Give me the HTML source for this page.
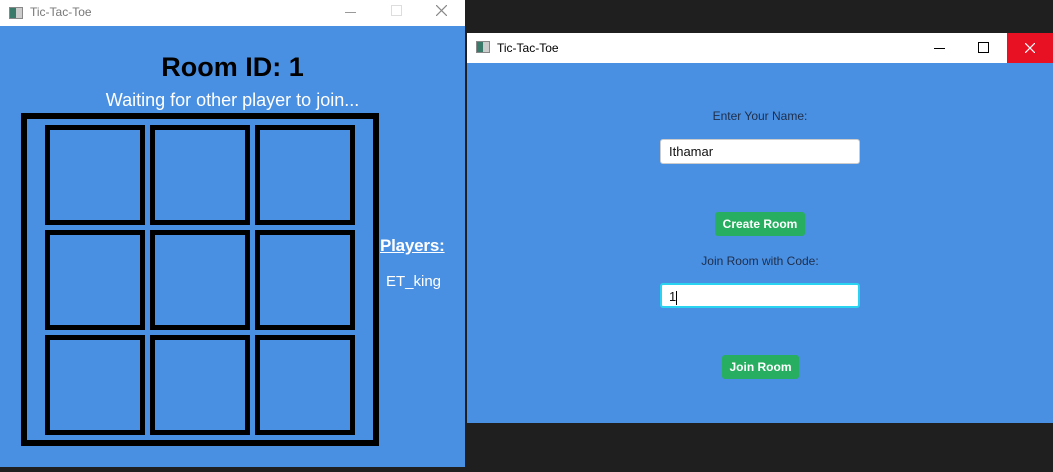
<!DOCTYPE html>
<html><head><style>
body{margin:0;width:1053px;height:472px;background:#1f1f1f;position:relative;overflow:hidden;font-family:"Liberation Sans",sans-serif}
.a{position:absolute}
.blue{background:#4a90e2}
.tb{background:#fff;font-size:12px}
.cell{position:absolute;width:90px;height:90px;border:5px solid #000}
.btn{position:absolute;background:#27ae60;color:#fff;font-weight:bold;font-size:12px;text-align:center;line-height:24px;border-radius:3px}
.inp{position:absolute;background:#fff;border-radius:3px;font-size:13px;line-height:24px;padding-left:8px;box-sizing:border-box;color:#111}
</style></head><body>
<!-- left window -->
<div class="a tb" style="left:0;top:0;width:465px;height:26px;color:#777">
 <div class="a" style="left:9px;top:7px;width:12px;height:10px;border:1px solid #888;background:linear-gradient(90deg,#3a7a6a 50%,#ccc 50%)"></div>
 <div class="a" style="left:30px;top:5px">Tic-Tac-Toe</div>
 <div class="a" style="left:345px;top:12px;width:11px;height:1px;background:#999"></div>
 <div class="a" style="left:391px;top:5px;width:9px;height:9px;border:1px solid #ddd"></div>
 <svg class="a" style="left:436px;top:5px" width="11" height="11"><path d="M0 0L11 11M11 0L0 11" stroke="#888" stroke-width="1.2"/></svg>
</div>
<div class="a blue" style="left:0;top:26px;width:465px;height:441px"></div>
<div class="a" style="left:0;top:52px;width:465px;text-align:center;font-size:27px;font-weight:bold;color:#000">Room ID: 1</div>
<div class="a" style="left:0;top:90px;width:465px;text-align:center;font-size:18px;color:#fff">Waiting for other player to join...</div>
<div class="a" style="left:21px;top:113px;width:346px;height:321px;border:6px solid #000"></div>
<div class="cell" style="left:45px;top:125px"></div><div class="cell" style="left:150px;top:125px"></div><div class="cell" style="left:255px;top:125px"></div>
<div class="cell" style="left:45px;top:230px"></div><div class="cell" style="left:150px;top:230px"></div><div class="cell" style="left:255px;top:230px"></div>
<div class="cell" style="left:45px;top:335px"></div><div class="cell" style="left:150px;top:335px"></div><div class="cell" style="left:255px;top:335px"></div>
<div class="a" style="left:380px;top:236px;font-size:17px;font-weight:bold;color:#fff;text-decoration:underline;letter-spacing:-0.2px">Players:</div>
<div class="a" style="left:386px;top:273px;font-size:15px;color:#fff">ET_king</div>
<!-- right window -->
<div class="a tb" style="left:467px;top:33px;width:586px;height:30px;color:#000">
 <div class="a" style="left:9px;top:8px;width:12px;height:10px;border:1px solid #888;background:linear-gradient(90deg,#3a7a6a 50%,#ccc 50%)"></div>
 <div class="a" style="left:30px;top:8px">Tic-Tac-Toe</div>
 <div class="a" style="left:467px;top:15px;width:11px;height:1px;background:#000"></div>
 <div class="a" style="left:511px;top:9px;width:9px;height:9px;border:1px solid #000"></div>
 <div class="a" style="left:540px;top:0;width:46px;height:30px;background:#e81123"></div>
 <svg class="a" style="left:558px;top:10px" width="10" height="10"><path d="M0 0L10 10M10 0L0 10" stroke="#fff" stroke-width="1.2"/></svg>
</div>
<div class="a blue" style="left:467px;top:63px;width:586px;height:360px"></div>
<div class="a" style="left:660px;top:109px;width:200px;text-align:center;font-size:12px;color:#1e2d4a">Enter Your Name:</div>
<div class="inp" style="left:660px;top:139px;width:200px;height:25px;border:1px solid #ccc">Ithamar</div>
<div class="btn" style="left:715px;top:212px;width:90px">Create Room</div>
<div class="a" style="left:660px;top:254px;width:200px;text-align:center;font-size:12px;color:#1e2d4a">Join Room with Code:</div>
<div class="inp" style="left:660px;top:283px;width:200px;height:25px;border:2px solid #2ad4f0;padding-left:7px">1<span style="display:inline-block;width:1px;height:14px;background:#000;vertical-align:middle"></span></div>
<div class="btn" style="left:722px;top:355px;width:77px">Join Room</div>
</body></html>
